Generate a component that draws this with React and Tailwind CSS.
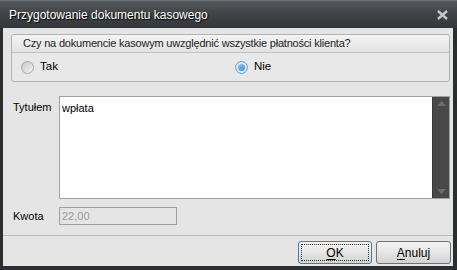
export default function App() {
  const font = { fontFamily: '"Liberation Sans", Arial, sans-serif' };
  return (
    <div className="w-[457px] h-[270px] bg-[#2b2d30] relative overflow-hidden" style={font}>
      {/* Title bar */}
      <div className="h-[28px] flex items-center justify-between pl-[9px] pr-[9px] bg-gradient-to-b from-[#55585d] via-[#404246] to-[#34363a] border-t border-[#6a6d72]">
        <span className="text-white text-[12px] leading-none [text-shadow:1px_1px_1px_#000]">
          Przygotowanie dokumentu kasowego
        </span>
        <svg width="11" height="10" viewBox="0 0 11 10" className="mt-[1px]">
          <path d="M1 1 L10 9 M10 1 L1 9" stroke="#c4c6c9" strokeWidth="2.4" />
        </svg>
      </div>
      {/* Client */}
      <div className="ml-[3px] mr-[4px] h-[238px] bg-[#e5e5e5] flex flex-col text-[11px] text-black">
        <div className="pl-[8px] pr-[3px] pt-[6px]">
          <div className="border border-[#b3b3b3] rounded-[3px] h-[48px] flex flex-col bg-[#e8e8e8]">
            <div className="h-[18px] flex items-center pl-[11px] border-b border-[#c3c3c3] bg-gradient-to-b from-[#f4f4f4] to-[#e2e2e2] rounded-t-[3px]">
              <span className="text-[#222] tracking-[-0.2px]">Czy na dokumencie kasowym uwzględnić wszystkie płatności klienta?</span>
            </div>
            <div className="flex-1 flex items-center">
              <div className="w-[223px] flex items-center pl-[9px] gap-[6px]">
                <span className="w-[13px] h-[13px] rounded-full border border-[#a8a8a8] bg-gradient-to-br from-[#c8c8c8] to-[#f4f4f4] inline-block" />
                <span className="text-[11.5px]">Tak</span>
              </div>
              <div className="flex items-center gap-[6px]">
                <span className="w-[13px] h-[13px] rounded-full border border-[#6a9ecb] bg-[#d4e8f8] flex items-center justify-center">
                  <span className="w-[7px] h-[7px] rounded-full bg-gradient-to-br from-[#8fc6f0] to-[#3f8fd0] inline-block" />
                </span>
                <span className="text-[11.5px]">Nie</span>
              </div>
            </div>
          </div>
        </div>
        <div className="flex pl-[10px] pr-[3px] mt-[14px]">
          <div className="w-[46px] pt-[3px]">Tytułem</div>
          <div className="w-[391px] h-[103px] border border-[#a0a0a0] bg-white flex">
            <div className="flex-1 pl-[2px] pt-[3px]">wpłata</div>
            <div className="w-[17px] h-full bg-[#484848] border-l border-[#3a3a3a] flex flex-col justify-between items-center py-[4px]">
              <svg width="9" height="5" viewBox="0 0 9 5"><path d="M0 5 L4.5 0 L9 5 Z" fill="#6c6c6c" /></svg>
              <svg width="9" height="5" viewBox="0 0 9 5"><path d="M0 0 L4.5 5 L9 0 Z" fill="#6c6c6c" /></svg>
            </div>
          </div>
        </div>
        <div className="flex pl-[10px] mt-[8px] items-center">
          <div className="w-[46px]">Kwota</div>
          <div className="w-[118px] h-[18px] border border-[#a0a0a0] bg-[#e5e5e5] text-[#9a9a9a] pl-[2px] flex items-center">22,00</div>
        </div>
        <div className="mt-[10px] border-t border-[#b8b8b8] flex-1 flex justify-end items-start pt-[5px] pr-[2px] gap-[4px]">
          <button className="w-[74px] h-[23px] rounded-[3px] border border-[#3c7fb1] bg-gradient-to-b from-[#f2f2f2] via-[#e6e6e6] to-[#d2d2d2] p-[2px] text-[12px]">
            <span className="w-full h-full border border-dotted border-[#333] flex items-center justify-center"><span className="underline underline-offset-2">O</span>K</span>
          </button>
          <button className="w-[75px] h-[23px] rounded-[3px] border border-[#707070] bg-gradient-to-b from-[#f2f2f2] via-[#e6e6e6] to-[#d2d2d2] flex items-center justify-center text-[12px]">
            <span className="underline underline-offset-2">A</span>nuluj
          </button>
        </div>
      </div>
    </div>
  );
}
